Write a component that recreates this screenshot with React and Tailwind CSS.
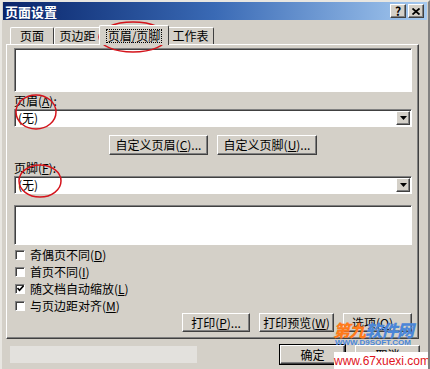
import React from "react";

const font = { fontFamily: '"Noto Sans CJK SC", "DejaVu Sans", sans-serif' };

// raised 3d button, win2000 style
const Btn = ({ children, className = "" }) => (
  <div
    className={`flex items-center justify-center border border-t-white border-l-white border-r-[#404040] border-b-[#404040] shadow-[inset_-1px_-1px_0_#808080] bg-[#d4d0c8] text-[12px] leading-none text-black ${className}`}
  >
    {children}
  </div>
);

const U = ({ children }) => <span className="underline underline-offset-1">{children}</span>;

const Sunken = ({ className = "", children }) => (
  <div
    className={`border border-t-[#808080] border-l-[#808080] border-r-white border-b-white shadow-[inset_1px_1px_0_#404040] bg-white ${className}`}
  >
    {children}
  </div>
);

const Combo = () => (
  <Sunken className="h-[18px] flex items-center justify-between pl-[3px] pr-[1px]">
    <span className="text-[12px] leading-none text-black">(无)</span>
    <Btn className="w-[14px] h-[14px]">
      <svg width="7" height="4" viewBox="0 0 7 4">
        <path d="M0 0h7L3.5 4z" fill="#000" />
      </svg>
    </Btn>
  </Sunken>
);

const Check = ({ checked, children }) => (
  <div className="h-[17px] flex items-center gap-[5px] pl-[1px]">
    <Sunken className="w-[10px] h-[10px] flex items-center justify-center">
      {checked && (
        <svg width="7" height="7" viewBox="0 0 7 7">
          <path d="M0.5 3l2 2.2L6.5 0.8" stroke="#000" strokeWidth="1.6" fill="none" />
        </svg>
      )}
    </Sunken>
    <span className="text-[12px] leading-none text-black">{children}</span>
  </div>
);

const Tab = ({ children, active, className = "" }) =>
  active ? (
    <div
      className={`relative z-10 -mx-[2px] h-[20px] -mb-[1px] flex items-center justify-center bg-[#d4d0c8] border border-b-0 border-t-white border-l-white border-r-[#404040] rounded-t-[2px] text-[12px] leading-none ${className}`}
    >
      <span className="outline outline-1 outline-dotted outline-black px-[1px]">{children}</span>
    </div>
  ) : (
    <div
      className={`h-[17px] flex items-center justify-center bg-[#d4d0c8] border border-b-0 border-t-white border-l-white border-r-[#404040] rounded-t-[2px] text-[12px] leading-none ${className}`}
    >
      {children}
    </div>
  );

export default function App() {
  return (
    <div className="relative w-[430px] h-[369px] overflow-hidden bg-[#d4d0c8] border-l-2 border-t-2 border-r-2 border-l-[#e8e6e1] border-t-[#e8e6e1] border-r-[#808080] text-black" style={font}>
      {/* title bar */}
      <div className="h-[18px] mx-[1px] flex items-center justify-between bg-linear-to-r from-[#0a246a] via-[#3a6ab5] to-[#a6caf0] pl-[2px] pr-[3px]">
        <span className="text-white text-[13px] font-bold leading-none">页面设置</span>
        <div className="flex gap-[2px]">
          <Btn className="w-[16px] h-[14px] text-[11px] font-bold">?</Btn>
          <Btn className="w-[16px] h-[14px]">
            <svg width="8" height="7" viewBox="0 0 8 7">
              <path d="M0.5 0.5l7 6M7.5 0.5l-7 6" stroke="#000" strokeWidth="1.8" />
            </svg>
          </Btn>
        </div>
      </div>

      {/* tabs */}
      <div className="flex items-end pl-[8px] mt-[5px] h-[19px]">
        <Tab className="w-[44px]">页面</Tab>
        <Tab className="w-[47px]">页边距</Tab>
        <Tab active className="w-[70px]">页眉/页脚</Tab>
        <Tab className="w-[47px]">工作表</Tab>
      </div>

      {/* panel */}
      <div className="ml-[4px] w-[413px] h-[295px] border border-t-white border-l-white border-r-[#404040] border-b-[#404040] shadow-[inset_-1px_-1px_0_#808080] pt-[3px] pl-[7px] pr-[6px]">
        <Sunken className="h-[44px]" />
        <div className="h-[14px] mt-[2px] text-[12px] leading-[14px]">页眉(<U>A</U>):</div>
        <div className="mt-[1px]">
          <Combo />
        </div>
        <div className="flex gap-[9px] pl-[95px] mt-[8px]">
          <Btn className="w-[99px] h-[20px]">自定义页眉(<U>C</U>)...</Btn>
          <Btn className="w-[100px] h-[20px]">自定义页脚(<U>U</U>)...</Btn>
        </div>
        <div className="h-[14px] mt-[6px] text-[12px] leading-[14px]">页脚(<U>F</U>):</div>
        <div className="mt-[1px]">
          <Combo />
        </div>
        <Sunken className="h-[40px] mt-[11px]" />
        <div className="mt-[1px]">
          <Check>奇偶页不同(<U>D</U>)</Check>
          <Check>首页不同(<U>I</U>)</Check>
          <Check checked>随文档自动缩放(<U>L</U>)</Check>
          <Check>与页边距对齐(<U>M</U>)</Check>
        </div>
        <div className="flex justify-end gap-[9px] mt-[-1px]">
          <Btn className="w-[68px] h-[19px]">打印(<U>P</U>)...</Btn>
          <Btn className="w-[75px] h-[19px]">打印预览(<U>W</U>)</Btn>
          <Btn className="w-[69px] h-[19px]">选项(<U>O</U>)...</Btn>
        </div>
      </div>

      {/* bottom row */}
      <div className="flex items-center mt-[6px] pl-[8px] gap-[83px]">
        <div className="w-[187px] h-[17px] bg-[#e3e1dd]" />
        <div className="flex gap-[10px]">
          <Btn className="w-[65px] h-[19px] outline outline-1 outline-black">确定</Btn>
          <Btn className="w-[65px] h-[19px]">取消</Btn>
        </div>
      </div>

      {/* red annotation ellipses */}
      <svg className="absolute left-[-2px] top-[-2px] pointer-events-none" width="430" height="369">
        <ellipse cx="133" cy="37" rx="34" ry="15" fill="none" stroke="#d4141c" strokeWidth="1.5" />
        <ellipse cx="36" cy="112" rx="20" ry="17" fill="none" stroke="#d4141c" strokeWidth="1.5" />
        <ellipse cx="40" cy="181" rx="21" ry="16" fill="none" stroke="#d4141c" strokeWidth="1.5" />
      </svg>

      {/* watermarks */}
      <div className="absolute left-[331px] top-[319px] flex flex-col items-center pointer-events-none">
        <div className="text-[17px] font-black leading-none tracking-[-1px] italic">
          <span className="text-[#ff7a1a]">第九</span>
          <span className="text-[#4a86d8]">软件网</span>
        </div>
        <div className="text-[8px] font-bold leading-none text-[#4a86d8] mt-[1px]" style={{ fontFamily: '"Liberation Sans", sans-serif' }}>
          WWW.D9SOFT.COM
        </div>
      </div>
      <div
        className="absolute left-[332px] top-[350px] w-[96px] h-[17px] bg-white flex items-center justify-center text-[12px] leading-none text-[#e0141c]"
        style={{ fontFamily: '"Liberation Sans", sans-serif' }}
      >
        www.67xuexi.com
      </div>
    </div>
  );
}
